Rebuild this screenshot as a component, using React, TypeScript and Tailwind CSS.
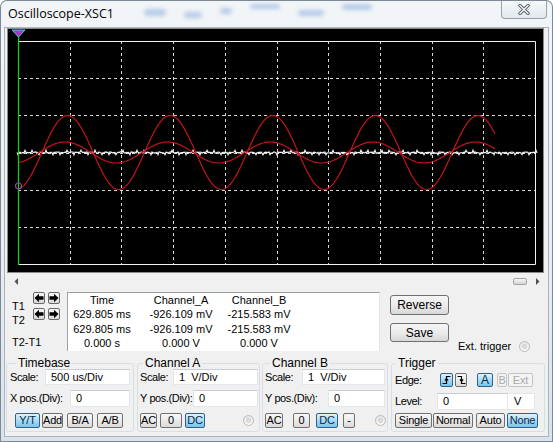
import React from "react";

const btnBase =
  "flex items-center justify-center rounded-[2px] border text-[11px] leading-none shrink-0 whitespace-nowrap tracking-[-0.2px]";
const btnNormal =
  "border-[#707070] bg-linear-to-b from-[#f7f7f7] via-[#ebebeb] to-[#dadada] text-black";
const btnActive =
  "border-[#2c628b] bg-linear-to-b from-[#e0f2fc] via-[#a9dbf6] to-[#79c3ec] text-[#0b2a4a]";
const btnDisabled = "border-[#c0c4c8] bg-[#f4f4f4] text-[#a9a9a9]";

function Btn({
  children,
  cls,
  kind = "n",
}: {
  children: React.ReactNode;
  cls: string;
  kind?: "n" | "a" | "d";
}) {
  const k = kind === "a" ? btnActive : kind === "d" ? btnDisabled : btnNormal;
  return <div className={`${btnBase} ${k} ${cls}`}>{children}</div>;
}

function Input({ value, cls }: { value: string; cls: string }) {
  return (
    <div
      className={`flex items-center bg-white border border-[#e3e7eb] border-t-[#c9ced4] pl-[5px] text-[11px] shrink-0 whitespace-pre ${cls}`}
    >
      {value}
    </div>
  );
}

function Label({ text, cls }: { text: string; cls: string }) {
  return <span className={`shrink-0 whitespace-nowrap tracking-[-0.4px] ${cls}`}>{text}</span>;
}

function Radio({ cls }: { cls: string }) {
  return (
    <div
      className={`w-[11px] h-[11px] rounded-full border border-[#b9b9b9] bg-linear-to-b from-[#e6e6e6] to-[#fafafa] flex items-center justify-center shrink-0 ${cls}`}
    >
      <div className="w-[5px] h-[5px] rounded-full bg-[#dedede] border border-[#cfcfcf]" />
    </div>
  );
}

function ArrowBtn({ dir }: { dir: "l" | "r" }) {
  return (
    <div className="w-[12px] h-[12px] rounded-[2px] border border-[#6a6a6a] bg-linear-to-b from-[#f7f7f7] to-[#d9d9d9] flex items-center justify-center shrink-0">
      <svg width="10" height="10" viewBox="0 0 10 10" className="block">
        {dir === "l" ? (
          <path d="M0.5 5 L5 0.8 L5 3.3 L9.5 3.3 L9.5 6.7 L5 6.7 L5 9.2 Z" fill="#000" />
        ) : (
          <path d="M9.5 5 L5 0.8 L5 3.3 L0.5 3.3 L0.5 6.7 L5 6.7 L5 9.2 Z" fill="#000" />
        )}
      </svg>
    </div>
  );
}

function Scope() {
  const gx0 = 10,
    gx1 = 527,
    gy0 = 12,
    gy1 = 235;
  const dx = (gx1 - gx0) / 10;
  const dy = (gy1 - gy0) / 6;
  const cy = 123.5;
  const P = 102.6;
  const waveA: string[] = [];
  const waveB: string[] = [];
  for (let x = 10; x <= 487; x += 1) {
    waveA.push(`${x},${(cy - 37 * Math.cos((2 * Math.PI * (x - 59.5)) / P)).toFixed(2)}`);
    waveB.push(`${x},${(cy - 10.5 * Math.cos((2 * Math.PI * (x - 57)) / P)).toFixed(2)}`);
  }
  const noise: string[] = [];
  for (let x = 9; x <= 529; x += 1) {
    const h = Math.sin(x * 12.9898) * 43758.5453;
    const r = h - Math.floor(h);
    let y = cy + (r - 0.5) * 1.2;
    if (x % 7 === 3) y = cy + (r > 0.5 ? 2.2 : -2.2);
    noise.push(`${x},${y.toFixed(2)}`);
  }
  const vlines = [];
  for (let i = 1; i < 10; i++) {
    const x = Math.round(gx0 + i * dx) + 0.5;
    vlines.push(
      <line key={`v${i}`} x1={x} y1={gy0} x2={x} y2={gy1} stroke="#d8d8d8" strokeWidth="1" strokeDasharray="3 3" />
    );
  }
  const hlines = [];
  for (let j = 1; j < 6; j++) {
    const y = Math.round(gy0 + j * dy) + 0.5;
    hlines.push(
      <line key={`h${j}`} x1={gx0} y1={y} x2={gx1} y2={y} stroke="#d8d8d8" strokeWidth="1" strokeDasharray="3 3" />
    );
  }
  return (
    <svg width="535" height="243" viewBox="0 0 535 243" className="block">
      <rect x="0" y="0" width="535" height="243" fill="#000" />
      {vlines}
      {hlines}
      <polyline points={`${gx0},${gy0 + 0.5} ${gx1 + 0.5},${gy0 + 0.5} ${gx1 + 0.5},${gy1 + 0.5} ${gx0},${gy1 + 0.5}`} fill="none" stroke="#f2f2f2" strokeWidth="1" />
      <polyline points={noise.join(" ")} fill="none" stroke="#f4f4f4" strokeWidth="1.2" />
      <polyline points={waveB.join(" ")} fill="none" stroke="#c4141c" strokeWidth="1.2" />
      <polyline points={waveA.join(" ")} fill="none" stroke="#c4141c" strokeWidth="1.2" />
      <line x1="10.5" y1="1" x2="10.5" y2={gy1 + 1} stroke="#19c819" strokeWidth="1.3" />
      <polygon points="4,1 17,1 10.5,8" fill="#b42fc4" stroke="#3cd2f0" strokeWidth="1" />
      <circle cx="10.5" cy="157" r="3" fill="none" stroke="#a23cb4" strokeWidth="1.2" />
    </svg>
  );
}

export default function App() {
  return (
    <div className="w-[553px] h-[442px] bg-[#7c8894] p-px rounded-t-[7px] font-['Liberation_Sans',Arial,sans-serif] text-[11px] text-black overflow-hidden">
      <div className="w-full h-full flex flex-col bg-linear-to-b from-[#f2f5f8] via-[#eaeff4] to-[#d9e2eb] rounded-t-[6px]">
        {/* Title bar */}
        <div className="h-[26px] flex items-start shrink-0">
          <div className="pl-[7px] pt-[5px] text-[12.5px] leading-[16px] font-['Open_Sans',sans-serif] text-black">
            Oscilloscope-XSC1
          </div>
          <div className="flex items-start gap-[18px] ml-[30px] pt-[3px] opacity-60">
            <div className="w-[22px] h-[7px] mt-[5px] bg-[#8fb0de] blur-[2px] rounded" />
            <div className="w-[18px] h-[6px] mt-[8px] bg-[#8fb0de] blur-[2px] rounded" />
            <div className="w-[12px] h-[6px] mt-[4px] bg-[#8fb0de] blur-[2px] rounded" />
            <div className="w-[30px] h-[5px] mt-[0px] bg-[#8fb0de] blur-[2px] rounded" />
            <div className="w-[26px] h-[6px] mt-[6px] bg-[#8fb0de] blur-[2px] rounded" />
            <div className="w-[30px] h-[6px] mt-[0px] bg-[#8fb0de] blur-[2px] rounded" />
          </div>
          <div className="ml-auto mr-[5px] w-[46px] h-[18px] rounded-b-[4px] border border-t-0 border-[#98a3ae] bg-linear-to-b from-[#f6f8fa] to-[#e3e8ed] flex items-center justify-center">
            <svg width="12" height="11" viewBox="0 0 12 11">
              <path d="M2 1.5 L10 9.5 M10 1.5 L2 9.5" stroke="#5a6068" strokeWidth="3.2" strokeLinecap="square" />
              <path d="M2 1.5 L10 9.5 M10 1.5 L2 9.5" stroke="#f4f4f4" strokeWidth="1.4" strokeLinecap="square" />
            </svg>
          </div>
        </div>

        {/* Content */}
        <div className="flex-1 mx-[3px] mb-[4px] bg-[#f0f0f0] border border-[#a9b4bf] flex flex-col">
          {/* Scope screen */}
          <div className="ml-[2px] w-[537px] h-[245px] border border-[#8a8a8a] shrink-0">
            <Scope />
          </div>

          {/* Scrollbar */}
          <div className="h-[16px] flex items-center shrink-0 pl-[9px] pr-[8px]">
            <svg width="5" height="7" viewBox="0 0 5 7">
              <path d="M4 0 L0.5 3.5 L4 7 Z" fill="#505050" />
            </svg>
            <div className="ml-auto w-[14px] h-[7px] rounded-[2px] border border-[#a4a4a4] bg-linear-to-b from-[#f4f4f4] to-[#d6d6d6]" />
            <svg width="5" height="7" viewBox="0 0 5 7" className="ml-[8px]">
              <path d="M1 0 L4.5 3.5 L1 7 Z" fill="#505050" />
            </svg>
          </div>

          {/* Measurements */}
          <div className="h-[62px] flex shrink-0">
            <div className="w-[62px] flex shrink-0">
              <div className="w-[28px] pl-[7px] flex flex-col text-[11px] leading-[13px] whitespace-nowrap">
                <div className="mt-[11px]">T1</div>
                <div className="mt-px">T2</div>
                <div className="mt-[9px]">T2-T1</div>
              </div>
              <div className="flex flex-col pt-[3px] gap-[4px]">
                <div className="flex gap-[3px]">
                  <ArrowBtn dir="l" />
                  <ArrowBtn dir="r" />
                </div>
                <div className="flex gap-[3px]">
                  <ArrowBtn dir="l" />
                  <ArrowBtn dir="r" />
                </div>
              </div>
            </div>
            <div className="mt-[3px] w-[313px] h-[59px] bg-white border border-[#a0a0a0] border-r-[#e4e4e4] border-b-0 grid grid-cols-[68px_90px_66px] pt-[1px] text-[11px] leading-[13px] text-center whitespace-nowrap">
              <div>Time</div>
              <div>Channel_A</div>
              <div>Channel_B</div>
              <div>629.805 ms</div>
              <div>-926.109 mV</div>
              <div>-215.583 mV</div>
              <div>629.805 ms</div>
              <div>-926.109 mV</div>
              <div>-215.583 mV</div>
              <div>0.000 s</div>
              <div>0.000 V</div>
              <div>0.000 V</div>
            </div>
            <div className="ml-[10px] w-[59px] flex flex-col shrink-0">
              <div className="mt-[6px] h-[20px] rounded-[3px] border border-[#707070] bg-linear-to-b from-[#f6f6f6] via-[#ebebeb] to-[#d8d8d8] flex items-center justify-center text-[12px]">
                Reverse
              </div>
              <div className="mt-[8px] h-[19px] rounded-[3px] border border-[#707070] bg-linear-to-b from-[#f6f6f6] via-[#ebebeb] to-[#d8d8d8] flex items-center justify-center text-[12px]">
                Save
              </div>
            </div>
            <div className="ml-[9px] mt-[51px] h-[12px] flex items-center whitespace-nowrap">
              <span className="text-[11px] leading-none">Ext. trigger</span>
              <Radio cls="ml-[8px]" />
            </div>
          </div>

          {/* Control groups */}
          <div className="mt-[7px] flex items-start shrink-0">
            {/* Timebase */}
            <fieldset className="ml-px w-[128px] h-[74px] border border-[#d5dfe5] rounded-[3px] pl-[3px]">
              <legend className="ml-[6px] px-[2px] text-[12px] leading-[11px]">Timebase</legend>
              <div className="flex items-center h-[16px]">
                <Label text="Scale:" cls="w-[35px]" />
                <Input value="500 us/Div" cls="w-[85px] h-[16px]" />
              </div>
              <div className="flex items-center h-[17px] mt-[5px]">
                <Label text="X pos.(Div):" cls="w-[60px]" />
                <Input value="0" cls="w-[60px] h-[17px]" />
              </div>
              <div className="flex items-center h-[15px] mt-[6px] pl-[5px]">
                <Btn kind="a" cls="w-[25px] h-[15px]">Y/T</Btn>
                <Btn cls="w-[21px] h-[15px] ml-[2px]">Add</Btn>
                <Btn cls="w-[26px] h-[15px] ml-[4px]">B/A</Btn>
                <Btn cls="w-[26px] h-[15px] ml-[4px]">A/B</Btn>
              </div>
            </fieldset>

            {/* Channel A */}
            <fieldset className="ml-[3px] w-[123px] h-[74px] border border-[#d5dfe5] rounded-[3px] pl-[2px]">
              <legend className="ml-[3px] px-[2px] text-[12px] leading-[11px]">Channel A</legend>
              <div className="flex items-center h-[16px]">
                <Label text="Scale:" cls="w-[33px]" />
                <Input value="1  V/Div" cls="w-[85px] h-[16px]" />
              </div>
              <div className="flex items-center h-[17px] mt-[5px]">
                <Label text="Y pos.(Div):" cls="w-[53px]" />
                <Input value="0" cls="w-[65px] h-[17px]" />
              </div>
              <div className="flex items-center h-[15px] mt-[6px]">
                <Btn cls="w-[17px] h-[15px]">AC</Btn>
                <Btn cls="w-[22px] h-[15px] ml-[3px]">0</Btn>
                <Btn kind="a" cls="w-[20px] h-[15px] ml-[3px]">DC</Btn>
                <Radio cls="ml-[38px]" />
              </div>
            </fieldset>

            {/* Channel B */}
            <fieldset className="ml-[2px] w-[126px] h-[74px] border border-[#d5dfe5] rounded-[3px] pl-[2px]">
              <legend className="ml-[5px] px-[2px] text-[12px] leading-[11px]">Channel B</legend>
              <div className="flex items-center h-[16px]">
                <Label text="Scale:" cls="w-[37px]" />
                <Input value="1  V/Div" cls="w-[83px] h-[16px]" />
              </div>
              <div className="flex items-center h-[17px] mt-[5px]">
                <Label text="Y pos.(Div):" cls="w-[63px]" />
                <Input value="0" cls="w-[57px] h-[17px]" />
              </div>
              <div className="flex items-center h-[15px] mt-[6px]">
                <Btn cls="w-[18px] h-[15px]">AC</Btn>
                <Btn cls="w-[17px] h-[15px] ml-[10px]">0</Btn>
                <Btn kind="a" cls="w-[22px] h-[15px] ml-[6px]">DC</Btn>
                <Btn cls="w-[12px] h-[15px] ml-[5px]">-</Btn>
                <Radio cls="ml-[20px]" />
              </div>
            </fieldset>

            {/* Trigger */}
            <fieldset className="ml-[3px] w-[154px] h-[74px] border border-[#d5dfe5] rounded-[3px] pl-[3px]">
              <legend className="ml-px px-[2px] text-[12px] leading-[11px]">Trigger</legend>
              <div className="flex items-center h-[14px] mt-[4px]">
                <Label text="Edge:" cls="w-[45px]" />
                <Btn kind="a" cls="w-[13px] h-[14px]">
                  <svg width="9" height="10" viewBox="0 0 9 10">
                    <path d="M0.5 8.5 H4.5 V1.5 H8.5" fill="none" stroke="#000" strokeWidth="1.2" />
                    <path d="M2.8 5.5 L4.5 3.8 L6.2 5.5" fill="none" stroke="#000" strokeWidth="1.1" />
                  </svg>
                </Btn>
                <Btn cls="w-[12px] h-[14px] ml-[2px]">
                  <svg width="9" height="10" viewBox="0 0 9 10">
                    <path d="M0.5 1.5 H4.5 V8.5 H8.5" fill="none" stroke="#000" strokeWidth="1.2" />
                    <path d="M2.8 4.5 L4.5 6.2 L6.2 4.5" fill="none" stroke="#000" strokeWidth="1.1" />
                  </svg>
                </Btn>
                <Btn kind="a" cls="w-[16px] h-[14px] ml-[10px] text-[12px]">A</Btn>
                <Btn kind="d" cls="w-[10px] h-[14px] ml-[4px]">B</Btn>
                <Btn kind="d" cls="w-[25px] h-[14px] ml-px">Ext</Btn>
              </div>
              <div className="flex items-center h-[17px] mt-[6px]">
                <Label text="Level:" cls="w-[42px]" />
                <Input value="0" cls="w-[71px] h-[17px]" />
                <div className="w-[27px] h-[17px] bg-white border border-[#e3e7eb] border-l-0 flex items-center pl-[6px] text-[11px]">
                  V
                </div>
              </div>
              <div className="flex items-center h-[15px] mt-[3px]">
                <Btn cls="w-[37px] h-[15px]">Single</Btn>
                <Btn cls="w-[40px] h-[15px] ml-px">Normal</Btn>
                <Btn cls="w-[29px] h-[15px] ml-[3px]">Auto</Btn>
                <Btn kind="a" cls="w-[31px] h-[15px] ml-[2px]">None</Btn>
              </div>
            </fieldset>
          </div>
        </div>
      </div>
    </div>
  );
}
